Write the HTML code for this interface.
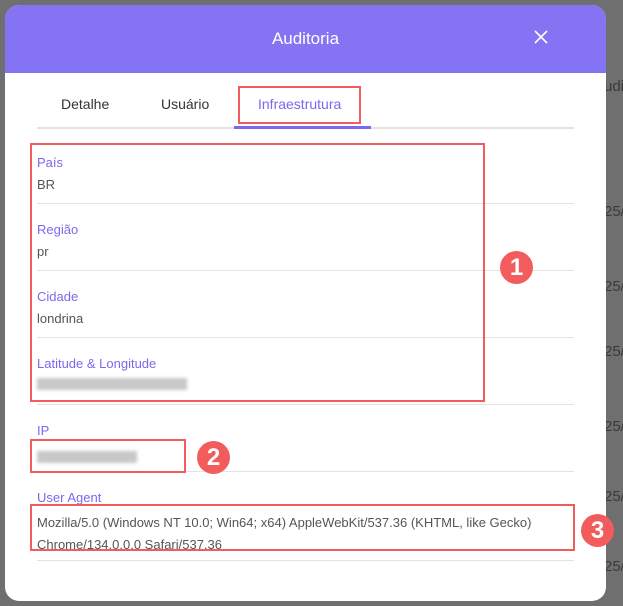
<!DOCTYPE html>
<html><head><meta charset="utf-8"><style>
*{margin:0;padding:0;box-sizing:border-box}
body{width:623px;height:606px;background:#6f6f6f;position:relative;overflow:hidden;font-family:"Liberation Sans",sans-serif}
.bg{position:absolute;color:#3a3a3a;font-size:15px}
.modal{position:absolute;left:5px;top:5px;width:601px;height:596px;background:#fff;border-radius:14px;overflow:hidden}
.hdr{height:68px;background:#8473f2;color:#fff;font-size:17px;text-align:center;line-height:68px}
.x{position:absolute;left:528px;top:24px;width:16px;height:16px}
.tab{position:absolute;top:91px;font-size:14px;color:#333}
.line{position:absolute;left:32px;width:537px;height:1px;background:#e4e4e4}
.lbl{position:absolute;left:32px;font-size:13px;color:#7b68ee}
.val{position:absolute;left:32px;font-size:13px;color:#555}
.blur{position:absolute;left:32px;height:12px;background:#c8c8c8;filter:blur(1.5px)}
.box{position:absolute;border:2px solid #f25c5c}
.num{position:absolute;width:33px;height:33px;border-radius:50%;background:#f25c5c;color:#fff;font-weight:bold;font-size:24px;text-align:center;line-height:33px}
</style></head><body>
<div class="bg" style="left:604px;top:78px">udit</div>
<div class="bg" style="left:604px;top:203px">25/</div>
<div class="bg" style="left:604px;top:278px">25/</div>
<div class="bg" style="left:604px;top:343px">25/</div>
<div class="bg" style="left:604px;top:418px">25/</div>
<div class="bg" style="left:604px;top:488px">25/</div>
<div class="bg" style="left:604px;top:558px">25/</div>
<div class="modal">
<div class="hdr">Auditoria</div>
<svg class="x" viewBox="0 0 16 16"><path d="M2 2L14 14M14 2L2 14" stroke="#fff" stroke-width="1.6"/></svg>
<div class="tab" style="left:56px">Detalhe</div>
<div class="tab" style="left:156px">Usuário</div>
<div class="tab" style="left:253px;color:#7b68ee">Infraestrutura</div>
<div class="line" style="top:122px;height:2px"></div>
<div style="position:absolute;left:229px;top:121px;width:137px;height:3px;background:#7b68ee"></div>
<div class="lbl" style="top:150px">País</div><div class="val" style="top:172px">BR</div>
<div class="line" style="top:198px"></div>
<div class="lbl" style="top:217px">Região</div><div class="val" style="top:239px">pr</div>
<div class="line" style="top:265px"></div>
<div class="lbl" style="top:284px">Cidade</div><div class="val" style="top:306px">londrina</div>
<div class="line" style="top:332px"></div>
<div class="lbl" style="top:351px">Latitude &amp; Longitude</div><div class="blur" style="top:373px;width:150px"></div>
<div class="line" style="top:399px"></div>
<div class="lbl" style="top:418px">IP</div><div class="blur" style="top:446px;width:100px"></div>
<div class="line" style="top:466px"></div>
<div class="lbl" style="top:485px">User Agent</div>
<div class="val" style="top:507px;line-height:22px;width:545px;white-space:nowrap">Mozilla/5.0 (Windows NT 10.0; Win64; x64) AppleWebKit/537.36 (KHTML, like Gecko)<br>Chrome/134.0.0.0 Safari/537.36</div>
<div class="line" style="top:555px"></div>
</div>
<div class="box" style="left:238px;top:86px;width:123px;height:38px"></div>
<div class="box" style="left:30px;top:143px;width:455px;height:259px"></div>
<div class="box" style="left:30px;top:439px;width:156px;height:34px"></div>
<div class="box" style="left:30px;top:504px;width:545px;height:47px"></div>
<div class="num" style="left:500px;top:251px">1</div>
<div class="num" style="left:197px;top:441px">2</div>
<div class="num" style="left:581px;top:514px">3</div>
</body></html>
